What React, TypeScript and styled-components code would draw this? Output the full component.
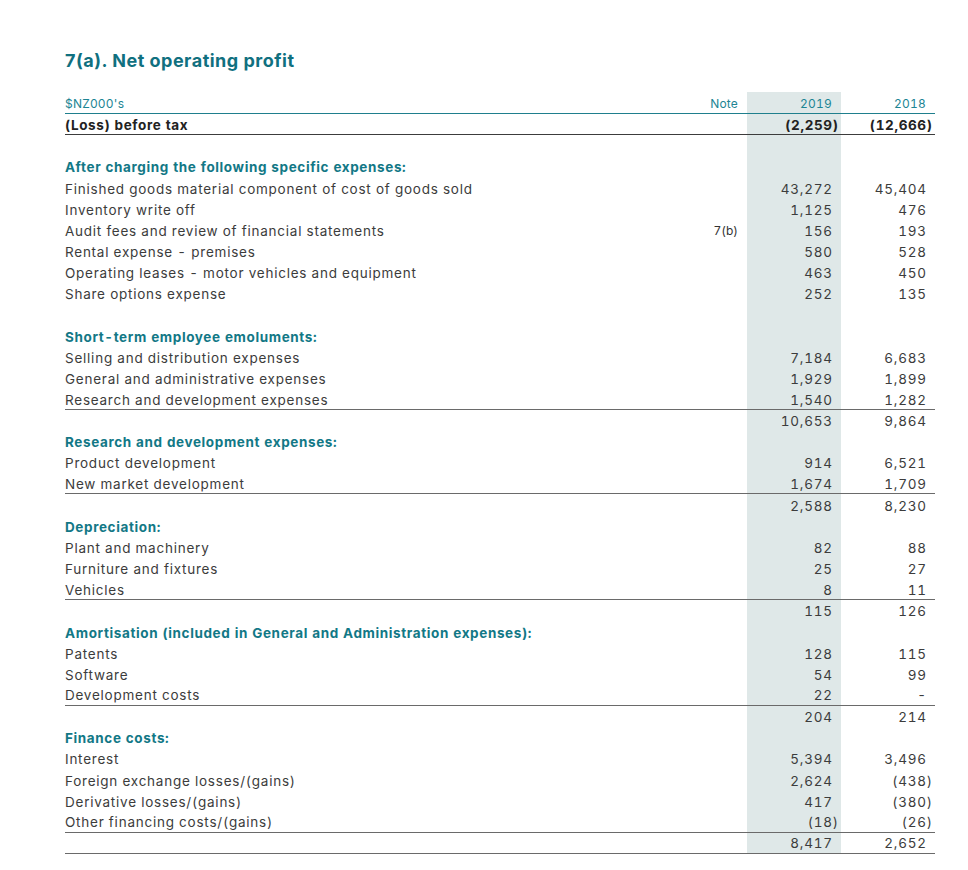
import React from "react";
import styled, { createGlobalStyle } from "styled-components";

const Global = createGlobalStyle`
  html, body { margin: 0; padding: 0; background: #ffffff; }
  body { font-family: Inter, "Open Sans", "Liberation Sans", sans-serif; }
`;

const Page = styled.div`
  width: 968px;
  box-sizing: border-box;
  padding: 50px 33px 20px 65px;
`;

const Title = styled.h1`
  margin: 0 0 20px 0;
  font-size: 18px;
  line-height: 22px;
  font-weight: 700;
  color: #10707f;
  letter-spacing: 0.5px;
`;

const Table = styled.div`
  display: flex;
  flex-direction: column;
  width: 870px;
`;

const Row = styled.div<{ $rule?: "teal" | "dark" | "grey"; $h?: number }>`
  display: grid;
  grid-template-columns: 1fr 100px 94px 94px;
  height: ${(p) => p.$h ?? 21.15}px;
  box-sizing: border-box;
  border-bottom: ${(p) =>
    p.$rule === "teal"
      ? "1px solid #1f7f8d"
      : p.$rule === "dark"
      ? "1px solid #3c3c3c"
      : p.$rule === "grey"
      ? "1px solid #6a6a6a"
      : "none"};
  font-size: 13.5px;
  color: #3c3c3c;
`;

const Cell = styled.div<{
  $align?: "left" | "right";
  $shaded?: boolean;
  $tone?: "head" | "bold" | "teal";
  $pad?: number;
}>`
  display: flex;
  align-items: center;
  padding-top: 1.5px;
  justify-content: ${(p) => (p.$align === "right" ? "flex-end" : "flex-start")};
  padding-right: ${(p) => (p.$align === "right" ? `${p.$pad ?? 8.3}px` : "0")};
  background: ${(p) => (p.$shaded ? "#dfe8e8" : "transparent")};
  white-space: nowrap;
  font-variant-numeric: tabular-nums;
  letter-spacing: ${(p) => (p.$tone === "teal" ? "0" : p.$tone === "head" || p.$tone === "bold" ? "0.62px" : "0.76px")};
  font-weight: ${(p) => (p.$tone === "head" || p.$tone === "bold" ? 700 : 400)};
  color: ${(p) =>
    p.$tone === "head" ? "#127886" : p.$tone === "bold" ? "#222222" : p.$tone === "teal" ? "#1d8594" : "inherit"};
`;

const HeaderLabel = styled.span`
  font-size: 12px;
  letter-spacing: 0.2px;
`;

const NoteText = styled.span`
  font-size: 12px;
  color: #333333;
`;

const Hang = styled.span`
  display: inline-block;
  width: 0;
`;

type Line =
  | { kind: "blank" }
  | { kind: "heading"; label: string }
  | { kind: "item"; label: string; note?: string; a: string; b: string; rule?: boolean }
  | { kind: "total"; a: string; b: string; rule?: boolean };

const lines: Line[] = [
  { kind: "blank" },
  { kind: "heading", label: "After charging the following specific expenses:" },
  { kind: "item", label: "Finished goods material component of cost of goods sold", a: "43,272", b: "45,404" },
  { kind: "item", label: "Inventory write off", a: "1,125", b: "476" },
  { kind: "item", label: "Audit fees and review of financial statements", note: "7(b)", a: "156", b: "193" },
  { kind: "item", label: "Rental expense - premises", a: "580", b: "528" },
  { kind: "item", label: "Operating leases - motor vehicles and equipment", a: "463", b: "450" },
  { kind: "item", label: "Share options expense", a: "252", b: "135" },
  { kind: "blank" },
  { kind: "heading", label: "Short-term employee emoluments:" },
  { kind: "item", label: "Selling and distribution expenses", a: "7,184", b: "6,683" },
  { kind: "item", label: "General and administrative expenses", a: "1,929", b: "1,899" },
  { kind: "item", label: "Research and development expenses", a: "1,540", b: "1,282", rule: true },
  { kind: "total", a: "10,653", b: "9,864" },
  { kind: "heading", label: "Research and development expenses:" },
  { kind: "item", label: "Product development", a: "914", b: "6,521" },
  { kind: "item", label: "New market development", a: "1,674", b: "1,709", rule: true },
  { kind: "total", a: "2,588", b: "8,230" },
  { kind: "heading", label: "Depreciation:" },
  { kind: "item", label: "Plant and machinery", a: "82", b: "88" },
  { kind: "item", label: "Furniture and fixtures", a: "25", b: "27" },
  { kind: "item", label: "Vehicles", a: "8", b: "11", rule: true },
  { kind: "total", a: "115", b: "126" },
  { kind: "heading", label: "Amortisation (included in General and Administration expenses):" },
  { kind: "item", label: "Patents", a: "128", b: "115" },
  { kind: "item", label: "Software", a: "54", b: "99" },
  { kind: "item", label: "Development costs", a: "22", b: "-", rule: true },
  { kind: "total", a: "204", b: "214" },
  { kind: "heading", label: "Finance costs:" },
  { kind: "item", label: "Interest", a: "5,394", b: "3,496" },
  { kind: "item", label: "Foreign exchange losses/(gains)", a: "2,624", b: "(438)" },
  { kind: "item", label: "Derivative losses/(gains)", a: "417", b: "(380)" },
  { kind: "item", label: "Other financing costs/(gains)", a: "(18)", b: "(26)", rule: true },
  { kind: "total", a: "8,417", b: "2,652", rule: true },
];

function Amount({ value }: { value: string }) {
  if (value.endsWith(")")) {
    return (
      <>
        {value.slice(0, -1)}
        <Hang>)</Hang>
      </>
    );
  }
  return <>{value}</>;
}

export default function App() {
  return (
    <>
      <Global />
      <Page>
        <Title>7(a). Net operating profit</Title>
        <Table>
          <Row $rule="teal" $h={22}>
            <Cell $tone="teal">
              <HeaderLabel>$NZ000's</HeaderLabel>
            </Cell>
            <Cell $align="right" $tone="teal" $pad={9}>
              <HeaderLabel>Note</HeaderLabel>
            </Cell>
            <Cell $align="right" $shaded $tone="teal" $pad={9}>
              <HeaderLabel>2019</HeaderLabel>
            </Cell>
            <Cell $align="right" $tone="teal" $pad={9}>
              <HeaderLabel>2018</HeaderLabel>
            </Cell>
          </Row>
          <Row $rule="dark" $h={21}>
            <Cell $tone="bold">(Loss) before tax</Cell>
            <Cell $align="right" />
            <Cell $align="right" $shaded $tone="bold">
              <Amount value="(2,259)" />
            </Cell>
            <Cell $align="right" $tone="bold">
              <Amount value="(12,666)" />
            </Cell>
          </Row>
          {lines.map((l, i) => {
            if (l.kind === "blank") {
              return (
                <Row key={i}>
                  <Cell />
                  <Cell />
                  <Cell $shaded />
                  <Cell />
                </Row>
              );
            }
            if (l.kind === "heading") {
              return (
                <Row key={i}>
                  <Cell $tone="head">{l.label}</Cell>
                  <Cell />
                  <Cell $shaded />
                  <Cell />
                </Row>
              );
            }
            if (l.kind === "total") {
              return (
                <Row key={i} $rule={l.rule ? "grey" : undefined}>
                  <Cell />
                  <Cell />
                  <Cell $align="right" $shaded>
                    <Amount value={l.a} />
                  </Cell>
                  <Cell $align="right">
                    <Amount value={l.b} />
                  </Cell>
                </Row>
              );
            }
            return (
              <Row key={i} $rule={l.rule ? "grey" : undefined}>
                <Cell>{l.label}</Cell>
                <Cell $align="right" $tone="teal" $pad={9}>
                  {l.note ? <NoteText>{l.note}</NoteText> : null}
                </Cell>
                <Cell $align="right" $shaded>
                  <Amount value={l.a} />
                </Cell>
                <Cell $align="right">
                  <Amount value={l.b} />
                </Cell>
              </Row>
            );
          })}
        </Table>
      </Page>
    </>
  );
}
